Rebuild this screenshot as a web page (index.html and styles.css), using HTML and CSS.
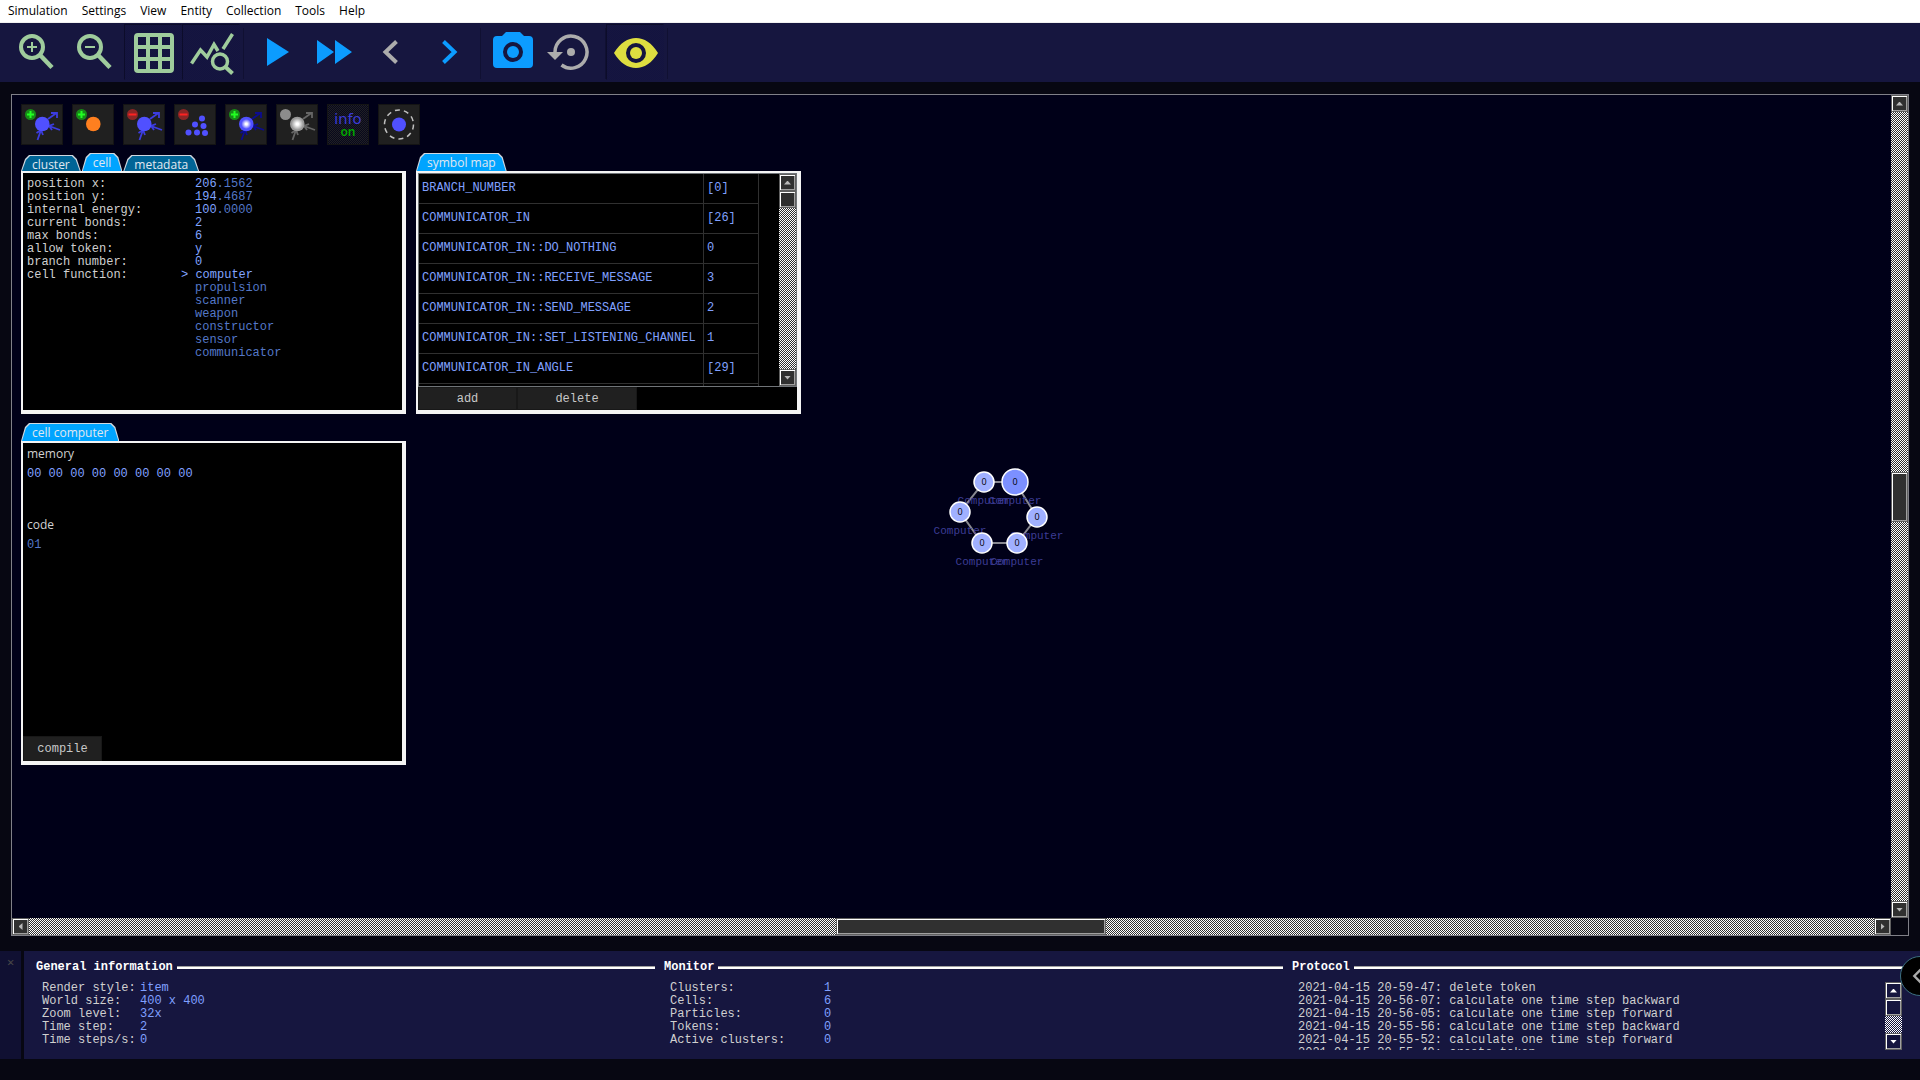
FILE: index.html
```html
<!DOCTYPE html>
<html lang="en">
	<head>
		<meta charset="utf-8">
		<meta name="viewport" content="width=device-width, initial-scale=1.0">
		<title>Simulation editor</title>
		<link rel="stylesheet" href="styles.css">
	</head>
	<body>
		<nav class="menubar">
			<a href="#">Simulation</a>
			<a href="#">Settings</a>
			<a href="#">View</a>
			<a href="#">Entity</a>
			<a href="#">Collection</a>
			<a href="#">Tools</a>
			<a href="#">Help</a>
		</nav>

		<div class="toolbar">
			<span class="sep first"></span>
			<button class="tool green" aria-label="Zoom in">
				<svg viewBox="8 24 58 56"><g fill="none" stroke="currentColor"><circle cx="32" cy="47" r="11" stroke-width="4"/><path d="M40.500 55.500L52 67.500" stroke-width="4.500"/><path d="M27 47h10M32 42v10" stroke-width="2"/></g></svg>
			</button>
			<button class="tool green" aria-label="Zoom out">
				<svg viewBox="8 24 58 56"><g fill="none" stroke="currentColor"><circle cx="32" cy="47" r="11" stroke-width="4"/><path d="M40.500 55.500L52 67.500" stroke-width="4.500"/><path d="M27 47h10" stroke-width="2"/></g></svg>
			</button>
			<button class="tool green pressed" aria-label="Grid">
				<svg viewBox="124 24 58 56"><g fill="none" stroke="currentColor" stroke-width="4"><rect x="136" y="35" width="36" height="36" rx="2"/><path d="M148 35v36M160 35v36M136 47h36M136 59h36"/></g></svg>
			</button>
			<button class="tool green pressed" aria-label="Monitor">
				<svg viewBox="182 24 58 56"><g fill="none" stroke="currentColor" stroke-width="3.500"><path d="M191.500 63.500L200.500 50L207 57L214 44.500L218 51M223 49L232.500 34"/><circle cx="220" cy="61.500" r="7.500"/><path d="M225.500 67L232.500 73.500" stroke-width="4"/></g></svg>
			</button>
			<span class="sep"></span>
			<button class="tool blue" aria-label="Run">
				<svg viewBox="244 24 58 56"><path fill="currentColor" d="M267 38L289 52L267 66z"/></svg>
			</button>
			<button class="tool blue" aria-label="Fast forward">
				<svg viewBox="302 24 58 56"><path fill="currentColor" d="M317 40L334 52L317 64zM335 40L352 52L335 64z"/></svg>
			</button>
			<button class="tool grey" aria-label="Step backward">
				<svg viewBox="360 24 58 56"><path fill="none" stroke="currentColor" stroke-width="4" d="M396.500 41.500L385.500 52L396.500 62.500"/></svg>
			</button>
			<button class="tool blue" aria-label="Step forward">
				<svg viewBox="418 24 58 56"><path fill="none" stroke="currentColor" stroke-width="4" d="M443.500 41.500L454.500 52L443.500 62.500"/></svg>
			</button>
			<span class="sep wide"></span>
			<button class="tool blue" aria-label="Snapshot">
				<svg viewBox="484 24 58 56"><path fill="currentColor" fill-rule="evenodd" d="M497 36H502L506 32H520L524 36H529Q533 36 533 40V64Q533 68 529 68H497Q493 68 493 64V40Q493 36 497 36zM503 52a10 10 0 1 0 20 0a10 10 0 1 0 -20 0z"/><circle cx="513" cy="52" r="6" fill="currentColor"/></svg>
			</button>
			<button class="tool grey" aria-label="Restore">
				<svg viewBox="542 24 58 56"><path fill="none" stroke="currentColor" stroke-width="3.500" d="M555 54V52A16 16 0 1 1 561.500 65"/><path fill="currentColor" d="M547 52H563L555 60z"/><circle cx="571" cy="52" r="4" fill="currentColor"/></svg>
			</button>
			<span class="sep last"></span>
			<button class="tool yellow pressed" aria-label="Editor mode">
				<svg viewBox="606 24 58 56"><path fill="currentColor" fill-rule="evenodd" d="M614 53C620 43 628 38 636 38S652 43 658 53C652 63 644 68 636 68S620 63 614 53zM626 53a10 10 0 1 0 20 0a10 10 0 1 0 -20 0z"/><circle cx="636" cy="53" r="6" fill="currentColor"/></svg>
			</button>
			<span class="sep"></span>
		</div>

		<!-- shared shapes for the editor buttons -->
		<svg class="defs" width="0" height="0">
			<defs>
				<g id="arrows" fill="none" stroke="currentColor" stroke-width="1.800">
					<path d="M27 15L35.500 9M30 9H36V14M39 26L28 22M33 20L28 22L31 26M16.500 36L20 26M15.500 29L20 26L22 31"/>
				</g>
				<g id="plus"><circle cx="9.500" cy="10.500" r="5.500" fill="#178c17"/><path d="M9.500 7v7M6 10.500h7" stroke="#2f2" stroke-width="2"/></g>
				<g id="minus"><circle cx="9.500" cy="10.500" r="5.500" fill="#8c2626"/><path d="M5.500 10.500h8" stroke="#f22" stroke-width="2"/></g>
				<radialGradient id="glow">
					<stop offset="0.200" stop-color="#fff"/>
					<stop offset="1" stop-color="#fff" stop-opacity="0"/>
				</radialGradient>
			</defs>
		</svg>

		<main class="view">
			<div class="scene">
				<svg class="graph" width="140" height="110" viewBox="930 460 140 110">
					<path class="bond" d="M984 482H1015L1037 517L1017 543H982L960 512z"/>
					<g class="caption">
						<text x="984" y="504">Computer</text>
						<text x="1015" y="504">Computer</text>
						<text x="1037" y="539">Computer</text>
						<text x="1017" y="565">Computer</text>
						<text x="982" y="565">Computer</text>
						<text x="960" y="534">Computer</text>
					</g>
					<g class="node">
						<circle cx="984" cy="482" r="10"/>
						<circle class="focus" cx="1015" cy="482" r="13"/>
						<circle cx="1037" cy="517" r="10"/>
						<circle cx="1017" cy="543" r="10"/>
						<circle cx="982" cy="543" r="10"/>
						<circle cx="960" cy="512" r="10"/>
					</g>
					<g class="number">
						<text x="984" y="485">0</text>
						<text x="1015" y="485">0</text>
						<text x="1037" y="520">0</text>
						<text x="1017" y="546">0</text>
						<text x="982" y="546">0</text>
						<text x="960" y="515">0</text>
					</g>
				</svg>

				<div class="editor">
					<div class="actions">
						<button class="action" aria-label="New cell"><svg viewBox="0 0 42 41" color="#3c3ce0"><use href="#arrows"/><circle cx="21.300" cy="20" r="7.300" fill="#5050ff"/><use href="#plus"/></svg></button>
						<button class="action" aria-label="New particle"><svg viewBox="0 0 42 41"><circle cx="21.300" cy="20" r="7.300" fill="#ff7f1f"/><use href="#plus"/></svg></button>
						<button class="action" aria-label="Delete cell"><svg viewBox="0 0 42 41" color="#3c3ce0"><use href="#arrows"/><circle cx="21.300" cy="20" r="7.300" fill="#5050ff"/><use href="#minus"/></svg></button>
						<button class="action" aria-label="Delete particles"><svg viewBox="0 0 42 41"><g fill="#5050ff"><circle cx="28" cy="14.500" r="3"/><circle cx="21" cy="20.500" r="3"/><circle cx="29.500" cy="22" r="3"/><circle cx="14.500" cy="28.500" r="3"/><circle cx="23" cy="28.500" r="3"/><circle cx="31" cy="29" r="3"/></g><use href="#minus"/></svg></button>
						<button class="action" aria-label="New token"><svg viewBox="0 0 42 41" color="#0c0c90"><use href="#arrows"/><circle cx="21.300" cy="20" r="7.300" fill="#5050ff"/><circle cx="21.300" cy="20" r="5" fill="url(#glow)"/><use href="#plus"/></svg></button>
						<button class="action" aria-label="Delete token"><svg viewBox="0 0 42 41" color="#666"><use href="#arrows"/><circle cx="21.300" cy="20" r="7.300" fill="#999"/><circle cx="21.300" cy="20" r="6" fill="url(#glow)"/><circle cx="9.500" cy="10.500" r="5.500" fill="#8c8c8c"/></svg></button>
						<button class="action info"><span>info</span><b>on</b></button>
						<button class="action" aria-label="Center selection"><svg viewBox="0 0 42 41"><circle cx="21" cy="20.500" r="14.500" fill="none" stroke="#c0c0c0" stroke-width="1.500" stroke-dasharray="5 4.110"/><circle cx="21" cy="20.500" r="7" fill="#5050ff"/></svg></button>
					</div>

					<div class="panels">
						<section>
							<div class="tabs">
								<button class="tab">cluster</button>
								<button class="tab active">cell</button>
								<button class="tab">metadata</button>
							</div>
							<div class="panel">
								<dl class="props">
									<dt>position x:</dt><dd>206<i>.1562</i></dd>
									<dt>position y:</dt><dd>194<i>.4687</i></dd>
									<dt>internal energy:</dt><dd>100<i>.0000</i></dd>
									<dt>current bonds:</dt><dd>2</dd>
									<dt>max bonds:</dt><dd>6</dd>
									<dt>allow token:</dt><dd>y</dd>
									<dt>branch number:</dt><dd>0</dd>
									<dt>cell function:</dt><dd class="current">computer</dd>
									<dd><i>propulsion</i></dd>
									<dd><i>scanner</i></dd>
									<dd><i>weapon</i></dd>
									<dd><i>constructor</i></dd>
									<dd><i>sensor</i></dd>
									<dd><i>communicator</i></dd>
								</dl>
							</div>
						</section>

						<section>
							<div class="tabs">
								<button class="tab active">symbol map</button>
							</div>
							<div class="panel">
								<div class="symbols">
									<div class="rows">
										<table>
											<tr><td>BRANCH_NUMBER</td><td>[0]</td></tr>
											<tr><td>COMMUNICATOR_IN</td><td>[26]</td></tr>
											<tr><td>COMMUNICATOR_IN::DO_NOTHING</td><td>0</td></tr>
											<tr><td>COMMUNICATOR_IN::RECEIVE_MESSAGE</td><td>3</td></tr>
											<tr><td>COMMUNICATOR_IN::SEND_MESSAGE</td><td>2</td></tr>
											<tr><td>COMMUNICATOR_IN::SET_LISTENING_CHANNEL</td><td>1</td></tr>
											<tr><td>COMMUNICATOR_IN_ANGLE</td><td>[29]</td></tr>
											<tr><td></td><td></td></tr>
										</table>
									</div>
									<div class="scroll vertical">
										<button class="arrow up" aria-label="Scroll up"></button>
										<div class="thumb"></div>
										<div class="track"></div>
										<button class="arrow down" aria-label="Scroll down"></button>
									</div>
								</div>
								<div class="buttons">
									<button class="push add">add</button>
									<button class="push delete">delete</button>
								</div>
							</div>
						</section>

						<section>
							<div class="tabs">
								<button class="tab active">cell computer</button>
							</div>
							<div class="panel computer">
								<h3>memory</h3>
								<p class="memory">00 00 00 00 00 00 00 00</p>
								<h3>code</h3>
								<p class="code"><i>01</i></p>
								<button class="push compile">compile</button>
							</div>
						</section>
					</div>
				</div>
			</div>
			<div class="scroll vertical">
				<button class="arrow up" aria-label="Scroll up"></button>
				<div class="track before"></div>
				<div class="thumb"></div>
				<div class="track after"></div>
				<button class="arrow down" aria-label="Scroll down"></button>
			</div>
			<div class="scroll horizontal">
				<button class="arrow left" aria-label="Scroll left"></button>
				<div class="track before"></div>
				<div class="thumb"></div>
				<div class="track after"></div>
				<button class="arrow right" aria-label="Scroll right"></button>
			</div>
		</main>

		<footer class="dock">
			<div class="dock-side"><button class="close" aria-label="Close">✕</button></div>
			<div class="dock-body">
				<section class="group">
					<h2>General information</h2>
					<dl class="general">
						<dt>Render style:</dt><dd>item</dd>
						<dt>World size:</dt><dd>400 x 400</dd>
						<dt>Zoom level:</dt><dd>32x</dd>
						<dt>Time step:</dt><dd>2</dd>
						<dt>Time steps/s:</dt><dd>0</dd>
					</dl>
				</section>
				<section class="group">
					<h2>Monitor</h2>
					<dl class="monitor">
						<dt>Clusters:</dt><dd>1</dd>
						<dt>Cells:</dt><dd>6</dd>
						<dt>Particles:</dt><dd>0</dd>
						<dt>Tokens:</dt><dd>0</dd>
						<dt>Active clusters:</dt><dd>0</dd>
					</dl>
				</section>
				<section class="group">
					<h2>Protocol</h2>
					<div class="protocol">
						<ul>
							<li>2021-04-15 20-59-47: delete token</li>
							<li>2021-04-15 20-56-07: calculate one time step backward</li>
							<li>2021-04-15 20-56-05: calculate one time step forward</li>
							<li>2021-04-15 20-55-56: calculate one time step backward</li>
							<li>2021-04-15 20-55-52: calculate one time step forward</li>
							<li>2021-04-15 20-55-49: create token</li>
						</ul>
						<div class="scroll vertical plain">
							<button class="arrow up" aria-label="Scroll up"></button>
							<div class="thumb"></div>
							<div class="track"></div>
							<button class="arrow down" aria-label="Scroll down"></button>
						</div>
					</div>
				</section>
			</div>
			<button class="drawer" aria-label="Open drawer">
				<svg viewBox="0 0 40 40"><path d="M24 10L14 20L24 30" fill="none" stroke="#aaa" stroke-width="2.500"/></svg>
			</button>
		</footer>
	</body>
</html>
```
FILE: styles.css
```css
* {
	box-sizing: border-box;
}

body {
	display: flex;
	flex-direction: column;
	height: 100vh;
	margin: 0;
	overflow: hidden;
	background: #070712;
	color: #d0d0d0;
	font: 12px/13px "Liberation Mono", monospace;
}

button {
	margin: 0;
	padding: 0;
	border: 0;
	background: none;
	color: inherit;
	font: inherit;
}

button svg {
	display: block;
	width: 100%;
	height: 100%;
}

h2, h3, p, dl, dd, ul {
	margin: 0;
	padding: 0;
}

i {
	font-style: normal;
	color: #5478c8;
}

.defs {
	position: absolute;
}

/* menu */
.menubar {
	display: flex;
	flex: none;
	gap: 14px;
	height: 23px;
	padding-left: 8px;
	border-bottom: 1px solid #f0f0f0;
	background: #fff;
	font: 12px/22px "Open Sans", sans-serif;
}

.menubar a {
	color: #000;
	text-decoration: none;
}

/* toolbar */
.toolbar {
	display: flex;
	flex: none;
	height: 59px;
	padding-top: 1px;
	background: #16163f;
}

.tool {
	width: 58px;
	height: 56px;
}

.pressed {
	border: 1px solid transparent;
	border-color: #0c0c2a transparent transparent #0c0c2a;
	background: repeating-conic-gradient(#16163f 0 25%, #131340 0 50%) 0 0/2px 2px;
}

.pressed svg {
	width: 58px;
	height: 56px;
	margin: -1px;
}

.green { color: #9fcc9c; }
.blue { color: #0c9cff; }
.grey { color: #acacac; }
.yellow { color: #dede40; }

.sep {
	width: 4px;
	margin: 4px 0 3px;
	border-right: 1px solid #101032;
}

.sep.first {
	width: 8px;
	border: 0;
}

.sep.wide {
	width: 8px;
	border-right: 0;
	background: linear-gradient(#101032, #101032) 4px 0/1px 100% no-repeat;
}

.sep.last {
	width: 6px;
}

/* world view */
.view {
	flex: 1;
	display: grid;
	grid-template: 1fr 17px / 1fr 17px;
	min-height: 0;
	margin: 12px 11px 15px;
	border: 1px solid #808088;
	background: #070712;
}

.scene {
	position: relative;
	min-height: 0;
	overflow: hidden;
	background: #000018;
}

.graph {
	position: absolute;
	left: 918px;
	top: 365px;
}

.bond {
	fill: none;
	stroke: #888890;
	stroke-width: 2;
}

.graph text {
	text-anchor: middle;
}

.caption {
	fill: #3c3c94;
	font-size: 11px;
}

.number {
	fill: #000;
	font: 9px "Open Sans", sans-serif;
}

.node {
	fill: #a0b0ff;
	stroke: #fff;
	stroke-width: 1.5;
}

.focus {
	fill: #7c90ff;
}

.editor {
	padding: 9px;
}

.actions {
	display: flex;
	gap: 9px;
	margin-bottom: 8px;
}

.action {
	width: 42px;
	height: 41px;
	border: 1px solid #141414;
	background: #202020;
}

.action svg {
	width: 42px;
	height: 41px;
	margin: -1px;
}

.info {
	display: flex;
	flex-direction: column;
	align-items: center;
	justify-content: center;
	background: repeating-conic-gradient(#202024 0 25%, #08081c 0 50%) 0 0/2px 2px;
	color: #3c3cd8;
	font: 15px/15px "Noto Sans", sans-serif;
}

.info b {
	color: #00a800;
	font-size: 12px;
	font-weight: 600;
	line-height: 12px;
}

.panels {
	display: grid;
	grid-template-columns: 385px 385px;
	gap: 9px 10px;
}

.tabs {
	display: flex;
	align-items: flex-end;
	gap: 1px;
	height: 18px;
}

.tab {
	position: relative;
	z-index: 0;
	height: 16px;
	padding: 2px 11px 0;
	background: #d0d8e0;
	clip-path: polygon(0 100%, 4px 4px, 8px 0, calc(100% - 8px) 0, calc(100% - 4px) 4px, 100% 100%);
	color: #e0e8f0;
	font: 12px/16px "Open Sans", sans-serif;
}

.tab::before {
	content: "";
	position: absolute;
	z-index: -1;
	inset: 1px 1px 0;
	background: #006496;
	clip-path: polygon(0 100%, 4px 4px, 8px 0, calc(100% - 8px) 0, calc(100% - 4px) 4px, 100% 100%);
}

.tab.active {
	height: 18px;
}

.tab.active::before {
	background: #00a4ff;
}

.panel {
	display: flex;
	flex-direction: column;
	height: 243px;
	border: solid #f4f4f4;
	border-width: 2px 4px 4px 2px;
	background: #000;
}

.props {
	display: grid;
	grid-template-columns: 168px 1fr;
	padding: 5px 4px;
	color: #80a4ff;
}

.props dt {
	color: #d0d0d0;
}

.props dd {
	grid-column: 2;
}

.current::before {
	content: "> ";
	margin-left: -14px;
}

.symbols {
	display: grid;
	grid-template-columns: 1fr 17px;
	height: 214px;
	border: 1px solid #707478;
}

.rows {
	min-height: 0;
	overflow: hidden;
}

.rows table {
	border-collapse: separate;
	border-spacing: 0;
	table-layout: fixed;
	width: 340px;
	color: #80a0ff;
}

.rows td {
	width: 55px;
	height: 30px;
	padding: 0 3px;
	border: solid #303030;
	border-width: 0 1px 1px 0;
	white-space: nowrap;
}

.rows td:first-child {
	width: 285px;
}

.buttons {
	display: flex;
}

.push {
	height: 23px;
	padding-top: 2px;
	border: 1px solid #181818;
	background: #202020;
	color: #c8c8c8;
}

.add { width: 99px; }
.delete { width: 120px; }

.computer {
	height: 324px;
}

.computer h3 {
	padding-left: 4px;
	font: 12px/22px "Open Sans", sans-serif;
}

.computer p {
	height: 49px;
	padding: 3px 4px;
	color: #80a0ff;
}

.compile {
	width: 79px;
	height: 25px;
	margin-top: auto;
}

/* scroll bars */
.scroll {
	display: flex;
	background: #303030;
}

.vertical {
	flex-direction: column;
	width: 17px;
}

.horizontal {
	height: 17px;
}

.track {
	flex: 1;
	background: repeating-conic-gradient(#fff 0 25%, #303030 0 50%) 0 0/2px 2px;
}

.arrow, .thumb {
	flex: none;
	width: 17px;
	height: 17px;
	border: 1px solid #606060;
	background: #303030;
	box-shadow: inset 1px 1px #fff, inset -1px -1px #a0a0a0;
}

.arrow::before {
	content: "";
	display: block;
	width: 7px;
	height: 4px;
	margin: auto;
	background: #b8b8b8;
}

.up::before { clip-path: polygon(50% 0, 100% 100%, 0 100%); }
.down::before { clip-path: polygon(0 0, 100% 0, 50% 100%); }

.left::before, .right::before {
	width: 4px;
	height: 7px;
}

.left::before { clip-path: polygon(0 50%, 100% 0, 100% 100%); }
.right::before { clip-path: polygon(0 0, 100% 50%, 0 100%); }

.view > .vertical .thumb { height: 50px; }
.view > .vertical .before { flex: 360; }
.view > .vertical .after { flex: 379; }
.view > .horizontal .thumb { width: 270px; }
.view > .horizontal .before { flex: 808; }
.view > .horizontal .after { flex: 768; }

.plain, .plain .arrow, .plain .thumb {
	background: #16163f;
}

.plain .track {
	background: repeating-conic-gradient(#fff 0 25%, #16163f 0 50%) 0 0/2px 2px;
}

.plain .arrow::before {
	background: #fff;
}

/* dock */
.dock {
	position: relative;
	display: flex;
	flex: none;
	gap: 3px;
	height: 108px;
	margin-bottom: 21px;
}

.dock-side {
	width: 21px;
	background: #101032;
	text-align: center;
}

.close {
	margin-top: 6px;
	color: #484848;
}

.dock-body {
	flex: 1;
	display: grid;
	grid-template-columns: repeat(3, 1fr);
	gap: 9px;
	padding: 10px 9px 0 12px;
	background: #16163f;
}

.group h2 {
	display: flex;
	align-items: center;
	gap: 4px;
	height: 13px;
	color: #fff;
	font: inherit;
	font-weight: bold;
}

.group h2::after {
	content: "";
	flex: 1;
	height: 2px;
	border-top: 1px solid #a0a0a0;
	background: #fff;
}

.group dl {
	display: grid;
	grid-template-columns: 98px 1fr;
	padding: 8px 6px;
}

.group dl.monitor {
	grid-template-columns: 154px 1fr;
}

.group dd {
	color: #80a0ff;
}

.protocol {
	display: flex;
	justify-content: space-between;
	height: 68px;
	margin: 8px 9px 0 6px;
}

.protocol ul {
	list-style: none;
	overflow: hidden;
}

.drawer {
	position: absolute;
	right: -20px;
	top: 5px;
	width: 40px;
	height: 40px;
	border: 1px solid #3c7080;
	border-radius: 50%;
	background: #000;
}
```
